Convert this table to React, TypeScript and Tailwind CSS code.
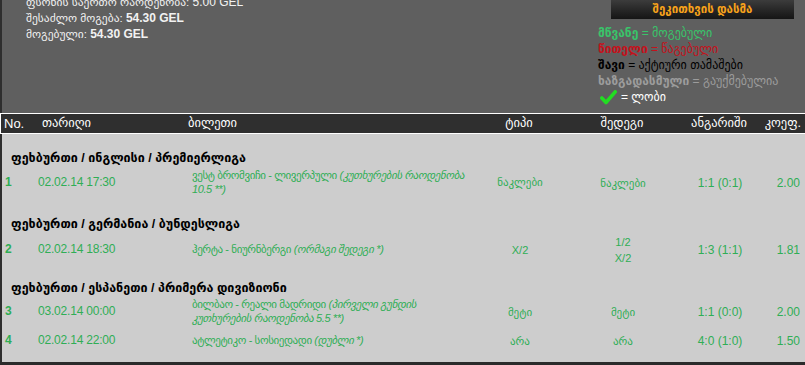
import React from "react";

const G = "text-[#2fae55]";

function Check() {
  return (
    <svg width="17" height="15" viewBox="0 0 17 15" className="inline-block">
      <path d="M1.8 8 L6 12.5 L15.2 1.8" fill="none" stroke="#22dd22" strokeWidth="3.6" strokeLinecap="round" strokeLinejoin="round" />
    </svg>
  );
}

type Row = {
  no: string;
  date: string;
  bilet: React.ReactNode;
  type: React.ReactNode;
  result: React.ReactNode;
  score: string;
  coef: string;
  h: string;
};

const COLS = "grid grid-cols-[35px_150px_285px_96px_110px_84px_1fr]";

function MatchRow({ r }: { r: Row }) {
  return (
    <div className={`${COLS} items-center ${r.h} ${G} text-[12px]`}>
      <div className="pl-[3px] font-bold">{r.no}</div>
      <div className="tracking-[-0.2px] pl-[1px]">{r.date}</div>
      <div className="pl-[5px] text-[11px] leading-[14px] tracking-[-0.4px] whitespace-nowrap">{r.bilet}</div>
      <div className="text-center text-[11px] pt-[2px]">{r.type}</div>
      <div className="text-center text-[11px] leading-[16px] pt-[2px]">{r.result}</div>
      <div className="text-center pt-[2px]">{r.score}</div>
      <div className="text-right pr-[5px] pt-[2px]">{r.coef}</div>
    </div>
  );
}

function Section({ title, pt }: { title: string; pt: string }) {
  return (
    <div className={`${pt} pl-[9px]`}>
      <div className="text-[12.5px] leading-[16px] font-bold text-black">{title}</div>
    </div>
  );
}

export default function App() {
  return (
    <div className="w-[805px] h-[365px] overflow-hidden flex flex-col font-['Liberation_Sans','DejaVu_Sans',sans-serif]">
      {/* top */}
      <div className="h-[113px] bg-[#5f5f5f] border-l-2 border-[#2e2e2e] flex justify-between">
        <div className="pl-[24px] -mt-[6px] text-[#f2f2f2] text-[12px] leading-[16px]">
          <div>
            <span className="text-[11.5px]">ფსონის საერთო რაოდენობა: </span>5.00 GEL
          </div>
          <div>
            <span className="text-[11.5px]">შესაძლო მოგება: </span>
            <b>54.30 GEL</b>
          </div>
          <div>
            <span className="text-[11.5px]">მოგებული: </span>
            <b>54.30 GEL</b>
          </div>
        </div>
        <div className="w-[207px] flex flex-col">
          <div className="ml-[13px] w-[183px] h-[19px] bg-gradient-to-b from-[#3c3c3c] to-[#151515] flex items-center justify-center text-[#f7a21b] text-[11.5px] font-bold">
            შეკითხვის დასმა
          </div>
          <div className="pt-[6px] text-[12px] leading-[16px]">
            <div className="text-[#39c46a]">
              <b>მწვანე</b> = მოგებული
            </div>
            <div className="text-[#c4121c]">
              <b>წითელი</b> = წაგებული
            </div>
            <div className="text-black">
              <b>შავი</b> = აქტიური თამაშები
            </div>
            <div className="text-[#9c9c9c]">
              <b>ხაზგადასმული</b> = გაუქმებულია
            </div>
            <div className="text-white flex items-center gap-[4px] pl-[2px]">
              <Check />
              <span>= ლობი</span>
            </div>
          </div>
        </div>
      </div>

      {/* header */}
      <div className={`h-[21px] bg-[#2f2f2f] border-y border-l border-white ${COLS} items-center text-white text-[12.5px]`}>
        <div className="pl-[3px] text-[13px]">No.</div>
        <div className="pl-[6px]">თარიღი</div>
        <div className="pl-[2px]">ბილეთი</div>
        <div className="text-center">ტიპი</div>
        <div className="text-center">შედეგი</div>
        <div className="text-center">ანგარიში</div>
        <div className="text-right pr-[4px]">კოეფ.</div>
      </div>

      {/* body */}
      <div className="flex-1 bg-[#cdcdcd] border-l-2 border-[#2e2e2e] flex flex-col">
        <Section title="ფეხბურთი / ინგლისი / პრემიერლიგა" pt="pt-[16px]" />
        <MatchRow
          r={{
            no: "1",
            date: "02.02.14 17:30",
            h: "h-[31px]",
            bilet: (
              <>
                ვესტ ბრომვიჩი - ლივერპული <i>(კუთხურების რაოდენობა</i>
                <br />
                <i>10.5 **)</i>
              </>
            ),
            type: "ნაკლები",
            result: "ნაკლები",
            score: "1:1 (0:1)",
            coef: "2.00",
          }}
        />
        <Section title="ფეხბურთი / გერმანია / ბუნდესლიგა" pt="pt-[19px]" />
        <MatchRow
          r={{
            no: "2",
            date: "02.02.14 18:30",
            h: "h-[32px]",
            bilet: (
              <>
                ჰერტა - ნიურნბერგი <i>(ორმაგი შედეგი *)</i>
              </>
            ),
            type: "X/2",
            result: (
              <>
                1/2
                <br />
                X/2
              </>
            ),
            score: "1:3 (1:1)",
            coef: "1.81",
          }}
        />
        <Section title="ფეხბურთი / ესპანეთი / პრიმერა დივიზიონი" pt="pt-[16px]" />
        <MatchRow
          r={{
            no: "3",
            date: "03.02.14 00:00",
            h: "h-[30px]",
            bilet: (
              <>
                ბილბაო - რეალი მადრიდი <i>(პირველი გუნდის</i>
                <br />
                <i>კუთხურების რაოდენობა 5.5 **)</i>
              </>
            ),
            type: "მეტი",
            result: "მეტი",
            score: "1:1 (0:0)",
            coef: "2.00",
          }}
        />
        <MatchRow
          r={{
            no: "4",
            date: "02.02.14 22:00",
            h: "h-[28px]",
            bilet: (
              <>
                ატლეტიკო - სოსიედადი <i>(დუბლი *)</i>
              </>
            ),
            type: "არა",
            result: "არა",
            score: "4:0 (1:0)",
            coef: "1.50",
          }}
        />
      </div>
      <div className="h-[3px] bg-[#2b2b2b]" />
    </div>
  );
}
